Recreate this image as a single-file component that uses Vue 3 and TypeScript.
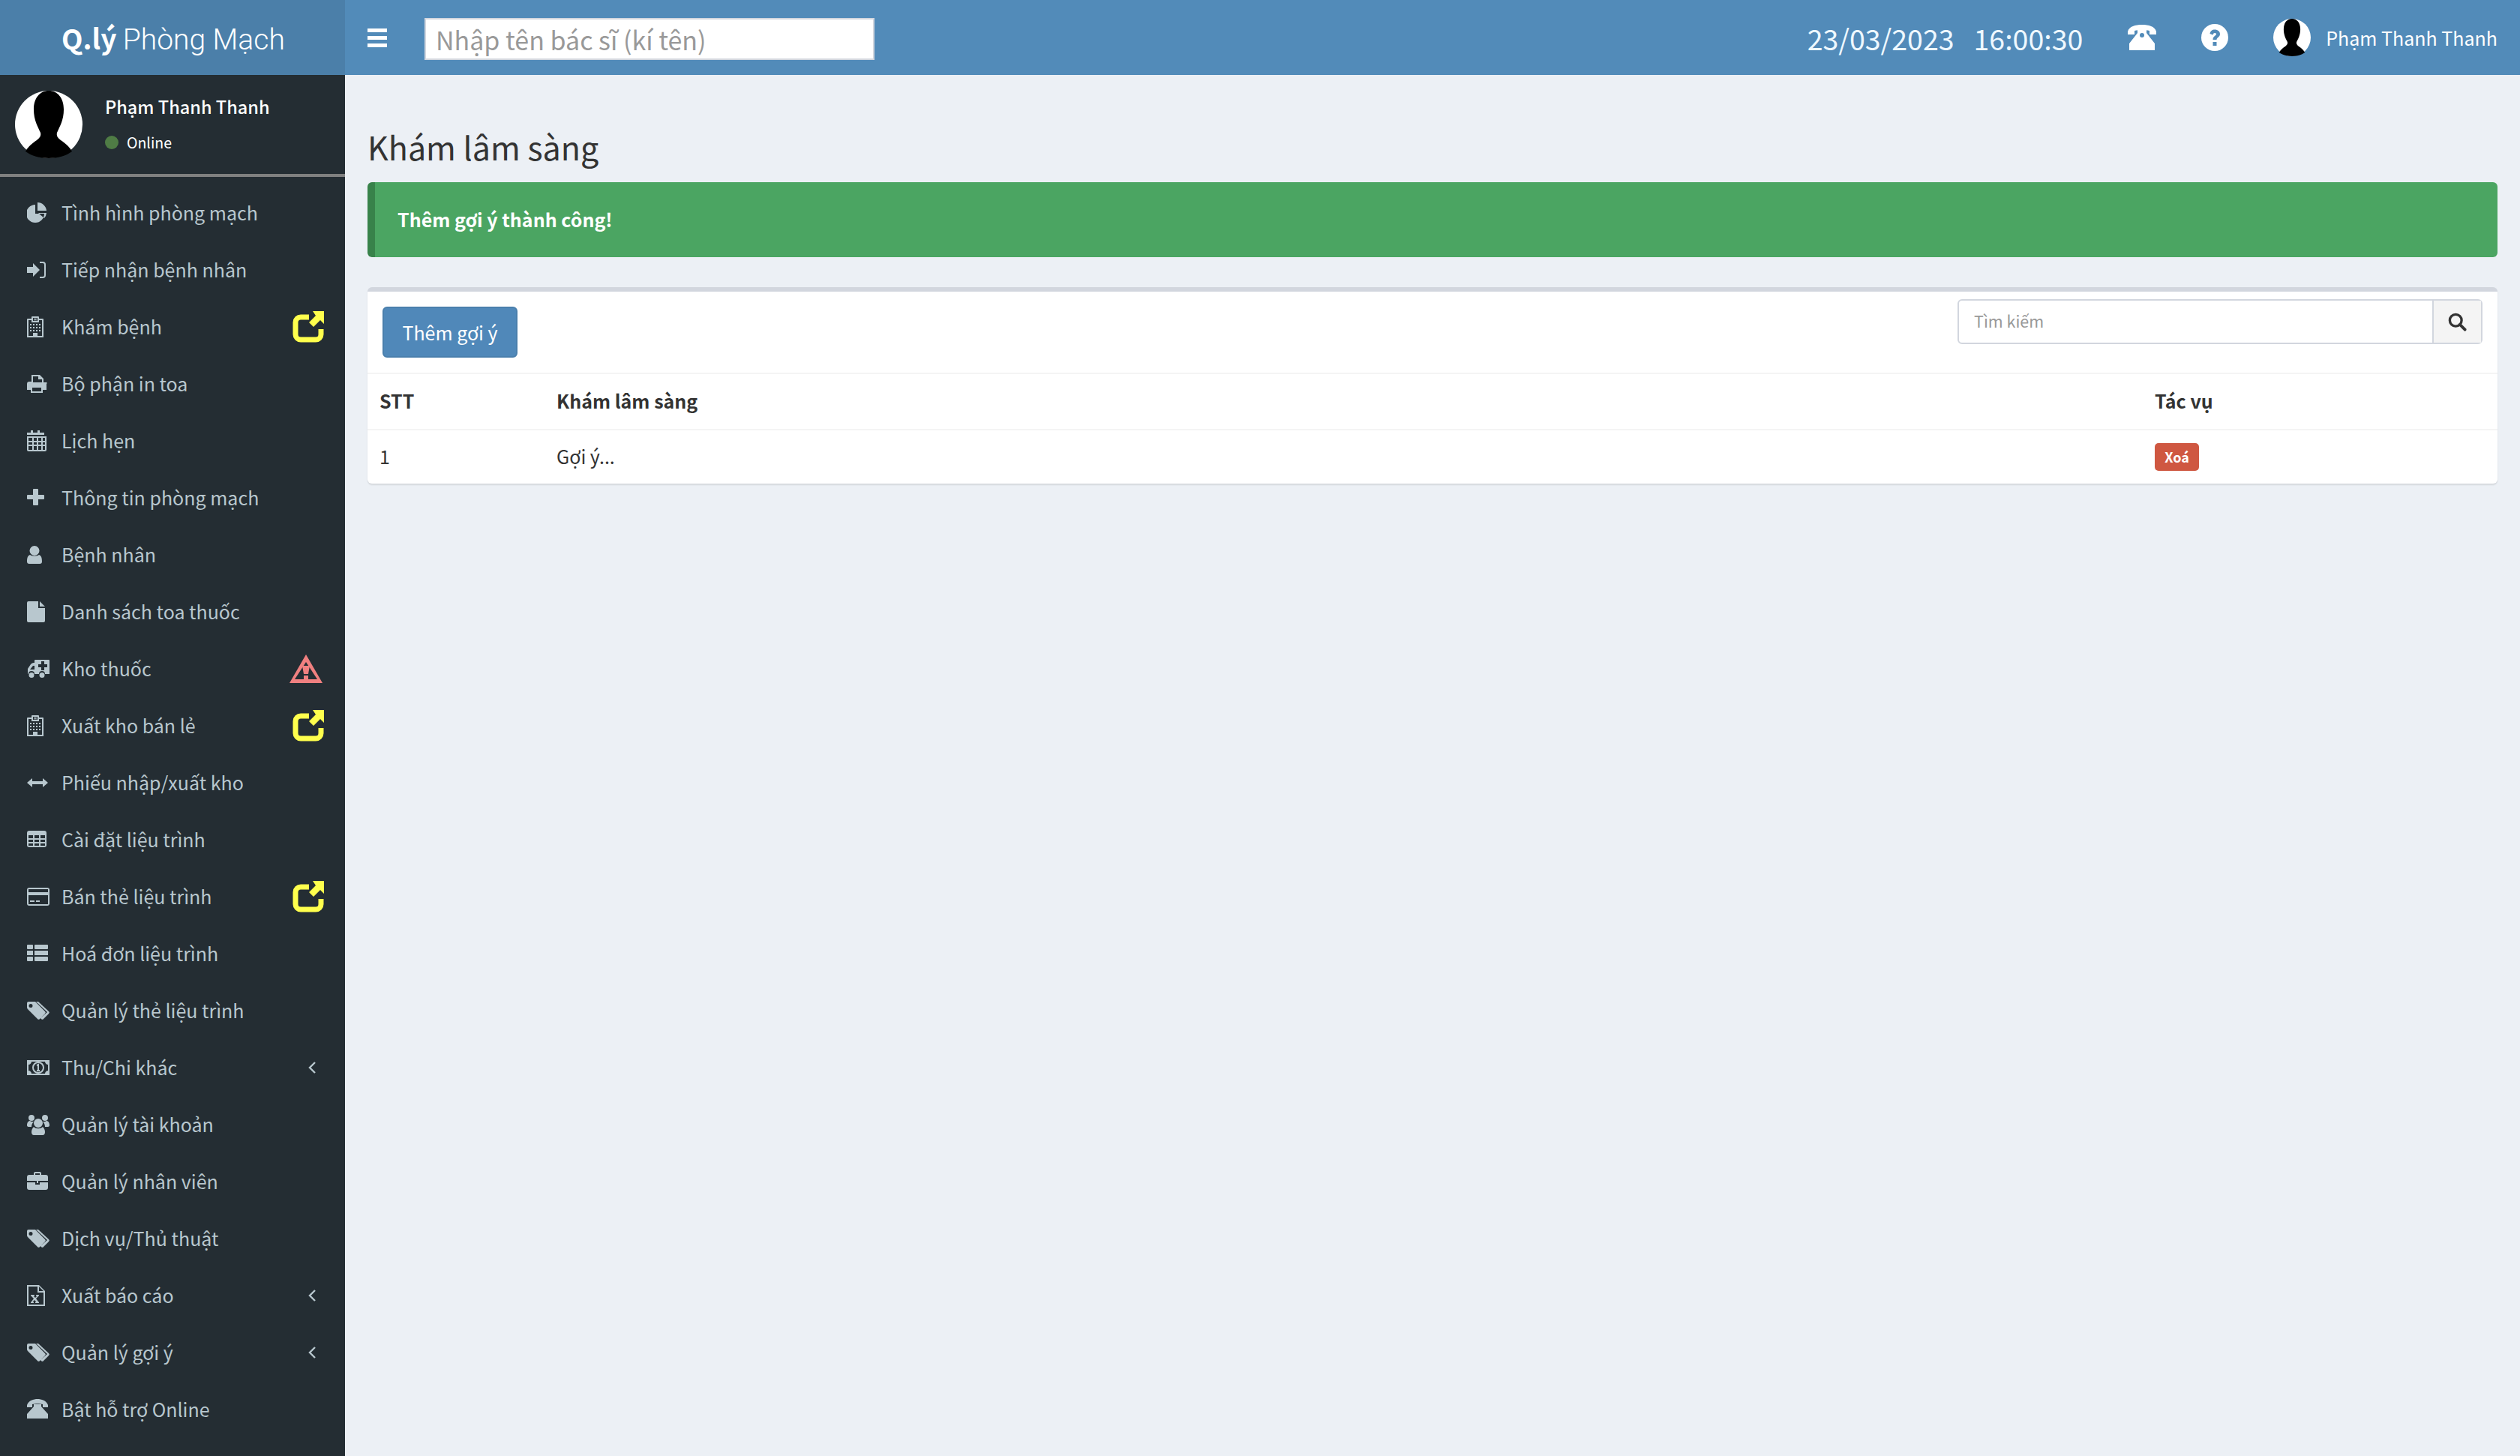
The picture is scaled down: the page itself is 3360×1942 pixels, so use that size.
<template>
  <div class="page">
    <header class="topbar">
      <div class="logo"><b>Q.lý</b> <span>Phòng Mạch</span></div>
      <div class="bar">
        <button class="burger" aria-label="menu"><i /><i /><i /></button>
        <input class="sign-input" placeholder="Nhập tên bác sĩ (kí tên)">
        <div class="bar-right">
          <span class="clock">23/03/2023</span>
          <span class="clock time">16:00:30</span>
          <svg class="phone" viewBox="0 0 38 34" width="38" height="34">
            <path d="M0 9C2 2 10 0 19 0s17 2 19 9v4h-9V8c-3-1-6-1-10-1s-7 0-10 1v5H0Z" fill="#fff" />
            <path d="M13 6h12v5l11 14v9H2v-9l11-14Z" fill="#fff" />
            <circle cx="19" cy="14" r="3" fill="#528bb9" />
          </svg>
          <svg class="help" viewBox="0 0 36 36" width="36" height="36">
            <circle cx="18" cy="18" r="18" fill="#fff" />
            <path d="M11.5 13c.5-3.500 3-5.500 6.500-5.500 4 0 7 2.500 7 6 0 4-4.500 4.500-4.500 7.500h-5c0-5 4.500-5.500 4.500-7.500 0-1-1-1.500-2-1.500-1.200 0-2 .8-2.500 2.500ZM15.500 24h5v5h-5Z" fill="#528bb9" />
          </svg>
          <svg class="avatar-small" viewBox="0 0 90 90" width="50" height="50">
            <circle cx="45" cy="45" r="45" fill="#fff" />
            <path :d="silhouette" fill="#000" />
          </svg>
          <span class="bar-name">Phạm Thanh Thanh</span>
        </div>
      </div>
    </header>

    <aside class="sidebar">
      <div class="user-panel">
        <svg viewBox="0 0 90 90" width="90" height="90">
          <circle cx="45" cy="45" r="45" fill="#fff" />
          <path :d="silhouette" fill="#000" />
        </svg>
        <div class="user-info">
          <div class="user-name">Phạm Thanh Thanh</div>
          <div class="user-status"><i />Online</div>
        </div>
      </div>
      <ul class="menu">
        <li v-for="item in menu" :key="item.label">
          <svg class="menu-icon" viewBox="0 0 32 32" width="32" height="32">
            <path v-if="icons[item.icon].fill" :d="icons[item.icon].fill" fill="#b8c7ce" fill-rule="evenodd" />
            <path v-if="icons[item.icon].line" :d="icons[item.icon].line" fill="none" stroke="#b8c7ce" stroke-width="2" />
          </svg>
          <span class="menu-label">{{ item.label }}</span>
          <svg v-if="item.tail === 'share'" class="tail" viewBox="0 0 42 42" width="42" height="42">
            <path d="M22 8H11a7 7 0 0 0-7 7v16a7 7 0 0 0 7 7h20a7 7 0 0 0 7-7v-7" fill="none" stroke="#ffff4d" stroke-width="7" />
            <path d="M27 0h15v17l-5-5-9 9-6-6 9-9Z" fill="#ffff4d" />
          </svg>
          <svg v-else-if="item.tail === 'warn'" class="tail warn" viewBox="0 0 44 38" width="44" height="38">
            <path d="M22 0 44 38H0ZM22 10 7 33h30Z" fill="#f08080" fill-rule="evenodd" />
            <path d="M17 15h10l-2 11h-6ZM19 28h6v5h-6Z" fill="#f08080" />
          </svg>
          <svg v-else-if="item.tail === 'arrow'" class="tail chevron" viewBox="0 0 12 18" width="12" height="18">
            <path d="M10 2 3 9l7 7" fill="none" stroke="#b8c7ce" stroke-width="2.4" />
          </svg>
        </li>
      </ul>
    </aside>

    <main class="content">
      <h1>Khám lâm sàng</h1>
      <div class="alert">Thêm gợi ý thành công!</div>
      <section class="box">
        <div class="box-tools">
          <button class="btn-add">Thêm gợi ý</button>
          <div class="search">
            <input placeholder="Tìm kiếm">
            <span class="search-btn">
              <svg viewBox="0 0 24 24" width="27" height="27">
                <circle cx="10" cy="10" r="7" fill="none" stroke="#333" stroke-width="3" />
                <path d="m15 15 6 6" stroke="#333" stroke-width="3.5" stroke-linecap="round" />
              </svg>
            </span>
          </div>
        </div>
        <table>
          <colgroup>
            <col class="col-stt">
            <col>
            <col class="col-action">
          </colgroup>
          <thead>
            <tr>
              <th>STT</th>
              <th>Khám lâm sàng</th>
              <th>Tác vụ</th>
            </tr>
          </thead>
          <tbody>
            <tr>
              <td>1</td>
              <td>Gợi ý...</td>
              <td><span class="badge">Xoá</span></td>
            </tr>
          </tbody>
        </table>
      </section>
    </main>
  </div>
</template>

<script setup lang="ts">
type Tail = 'share' | 'warn' | 'arrow'

interface MenuItem {
  icon: string
  label: string
  tail?: Tail
}

const silhouette = 'M45 0C33 0 25 10 25 25c0 14 5 22 9 31 1 4-1 7-5 10-6 4-12 9-15 15 8 6 19 9 31 9s23-3 31-9c-3-6-9-11-15-15-4-3-6-6-5-10 4-9 9-17 9-31C65 10 57 0 45 0Z'

const icons: Record<string, { fill?: string, line?: string }> = {
  pie: { fill: 'M11 5A12 12 0 1 0 23 17H11ZM14 2A12 12 0 0 1 26 13H14ZM15 16h11a12 12 0 0 1-3 7Z' },
  signin: { fill: 'M0 12h8V7l9 9-9 9v-5H0Z', line: 'M17 6h4a3 3 0 0 1 3 3v14a3 3 0 0 1-3 3h-4' },
  hospital: { fill: 'M6 5V3a1 1 0 0 1 1-1h8a1 1 0 0 1 1 1v2h5a1 1 0 0 1 1 1v24H0V6a1 1 0 0 1 1-1ZM2 7v21h6v-4h6v4h6V7h-4v3H6V7ZM8 4v4h6V4ZM9.5 4.5h1v1h1v-1h1v3h-1v-1h-1v1h-1ZM4 12h2v2H4ZM8 12h2v2H8ZM12 12h2v2h-2ZM16 12h2v2h-2ZM4 16h2v2H4ZM8 16h2v2H8ZM12 16h2v2h-2ZM16 16h2v2h-2ZM4 20h2v2H4ZM8 20h2v2H8ZM12 20h2v2h-2ZM16 20h2v2h-2Z' },
  print: { fill: 'M6 4h11l5 5v5h3a1 1 0 0 1 1 2v8h-5v4H5v-4H0v-8a3 3 0 0 1 3-3h3ZM8 6v8h12v-4h-5V6ZM7 21v5h12v-5Z' },
  calendar: { fill: 'M5 2h3v3h6V2h3v3h6v3H0V5h5ZM0 10h26v18a2 2 0 0 1-2 2H2a2 2 0 0 1-2-2ZM2 12v4h5v-4ZM9 12v4h4v-4ZM15 12v4h4v-4ZM21 12v4h3v-4ZM2 18v3h5v-3ZM9 18v3h4v-3ZM15 18v3h4v-3ZM21 18v3h3v-3ZM2 23v5h5v-5ZM9 23v5h4v-5ZM15 23v5h4v-5ZM21 23v5h3v-5Z' },
  plus: { fill: 'M9 4h5a1 1 0 0 1 1 1v7h7a1 1 0 0 1 1 1v4a1 1 0 0 1-1 1h-7v7a1 1 0 0 1-1 1H9a1 1 0 0 1-1-1v-7H1a1 1 0 0 1-1-1v-4a1 1 0 0 1 1-1h7V5a1 1 0 0 1 1-1Z' },
  user: { fill: 'M10 4a6.5 6.5 0 1 1 0 13 6.5 6.5 0 0 1 0-13ZM4 16c3 2 9 2 12 0 3 1 4 4 4 9 0 2-1 3-3 3H3c-2 0-3-1-3-3 0-5 1-8 4-9Z' },
  file: { fill: 'M0 4a2 2 0 0 1 2-2h13v9h9v17a2 2 0 0 1-2 2H2a2 2 0 0 1-2-2ZM17 2l7 7h-7Z' },
  ambulance: { fill: 'M11 4h18a1 1 0 0 1 1 1v18h-6a4 4 0 0 0-8 0H10a4 4 0 0 0-8 0 1 1 0 0 1-1-1v-6l4-6c1-1 2-2 4-2h1V5a1 1 0 0 1 1-1ZM4 17h6v-5H8ZM19 6v4h-4v4h4v4h4v-4h4v-4h-4V6ZM6 21a3.5 3.5 0 1 1 0 7 3.5 3.5 0 0 1 0-7ZM20 21a3.5 3.5 0 1 1 0 7 3.5 3.5 0 0 1 0-7Z' },
  arrows: { fill: 'M0 16l7-6v4h14v-4l7 6-7 6v-4H7v4Z' },
  table: { fill: 'M3 4h20a3 3 0 0 1 3 3v16a3 3 0 0 1-3 3H3a3 3 0 0 1-3-3V7a3 3 0 0 1 3-3ZM2 10v4h6v-4ZM10 10v4h6v-4ZM18 10v4h6v-4ZM2 16v3h6v-3ZM10 16v3h6v-3ZM18 16v3h6v-3ZM2 21v3h6v-3ZM10 21v3h6v-3ZM18 21v3h6v-3Z' },
  card: { fill: 'M3 4h24a3 3 0 0 1 3 3v18a3 3 0 0 1-3 3H3a3 3 0 0 1-3-3V7a3 3 0 0 1 3-3ZM2 6v4h26V6ZM2 14v12h26V14ZM4 21h6v2H4ZM12 21h5v2h-5Z' },
  list: { fill: 'M1 4h6a1 1 0 0 1 1 1v4a1 1 0 0 1-1 1H1a1 1 0 0 1-1-1V5a1 1 0 0 1 1-1ZM11 4h16a1 1 0 0 1 1 1v4a1 1 0 0 1-1 1H11a1 1 0 0 1-1-1V5a1 1 0 0 1 1-1ZM0 12h8v6H0ZM10 12h18v6H10ZM1 20h6a1 1 0 0 1 1 1v4a1 1 0 0 1-1 1H1a1 1 0 0 1-1-1v-4a1 1 0 0 1 1-1ZM11 20h16a1 1 0 0 1 1 1v4a1 1 0 0 1-1 1H11a1 1 0 0 1-1-1v-4a1 1 0 0 1 1-1Z' },
  tags: { fill: 'M2 4h9l13 13a2 2 0 0 1 0 3l-7 7a2 2 0 0 1-3 0L1 14a3 3 0 0 1-1-2V6a2 2 0 0 1 2-2ZM5 7a2.5 2.5 0 1 0 0 5 2.5 2.5 0 0 0 0-5ZM15 4l14 13a2 2 0 0 1 0 3l-7 7a2 2 0 0 1-3 0l-1-1 9-8L12 4Z' },
  money: { fill: 'M0 6h30v20H0ZM6 8c0 2-2 4-4 4v8c2 0 4 2 4 4h18c0-2 2-4 4-4v-8c-2 0-4-2-4-4Z', line: 'M15 16m-7 0a7 7 0 1 0 14 0a7 7 0 1 0-14 0M13 13l2-1v8M13 20h4' },
  users: { fill: 'M15 8a6 6 0 1 1 0 12 6 6 0 0 1 0-12ZM6 3a4 4 0 1 1 0 8 4 4 0 0 1 0-8ZM24 3a4 4 0 1 1 0 8 4 4 0 0 1 0-8ZM9 12c-2 2-3 4-3 7H2c-1 0-2-1-2-2 0-4 2-6 4-6 1 1 3 1 5 1ZM21 12c2 2 3 4 3 7h4c1 0 2-1 2-2 0-4-2-6-4-6-1 1-3 1-5 1ZM9 19c3 3 9 3 12 0 2 2 3 4 3 7 0 2-1 4-3 4H9c-2 0-3-2-3-4 0-3 1-5 3-7Z' },
  briefcase: { fill: 'M9 7V5a2 2 0 0 1 2-2h6a2 2 0 0 1 2 2v2h6a3 3 0 0 1 3 3v5H0v-5a3 3 0 0 1 3-3ZM11 5v2h6V5ZM0 17h11v3h6v-3h11v7a3 3 0 0 1-3 3H3a3 3 0 0 1-3-3ZM13 15h2v3h-2Z' },
  excel: { fill: 'M0 2h16l8 8v20H0ZM2 4v24h20V12h-8V4ZM16 4v6h6ZM5 15h5v1l-1 1 2 2 2-2-1-1v-1h4v1l-1 1-3 3 3 4 1 1v1h-5v-1l1-1-2-2-2 2 1 1v1H5v-1l1-1 3-4-3-3-1-1Z' },
  phone: { fill: 'M0 10C2 4 9 2 14 2s12 2 14 8v3h-7V9c-4-1-10-1-14 0v4H0ZM9 9h10v3l9 10v6H0v-6l9-10Z' }
}

const menu: MenuItem[] = [
  { icon: 'pie', label: 'Tình hình phòng mạch' },
  { icon: 'signin', label: 'Tiếp nhận bệnh nhân' },
  { icon: 'hospital', label: 'Khám bệnh', tail: 'share' },
  { icon: 'print', label: 'Bộ phận in toa' },
  { icon: 'calendar', label: 'Lịch hẹn' },
  { icon: 'plus', label: 'Thông tin phòng mạch' },
  { icon: 'user', label: 'Bệnh nhân' },
  { icon: 'file', label: 'Danh sách toa thuốc' },
  { icon: 'ambulance', label: 'Kho thuốc', tail: 'warn' },
  { icon: 'hospital', label: 'Xuất kho bán lẻ', tail: 'share' },
  { icon: 'arrows', label: 'Phiếu nhập/xuất kho' },
  { icon: 'table', label: 'Cài đặt liệu trình' },
  { icon: 'card', label: 'Bán thẻ liệu trình', tail: 'share' },
  { icon: 'list', label: 'Hoá đơn liệu trình' },
  { icon: 'tags', label: 'Quản lý thẻ liệu trình' },
  { icon: 'money', label: 'Thu/Chi khác', tail: 'arrow' },
  { icon: 'users', label: 'Quản lý tài khoản' },
  { icon: 'briefcase', label: 'Quản lý nhân viên' },
  { icon: 'tags', label: 'Dịch vụ/Thủ thuật' },
  { icon: 'excel', label: 'Xuất báo cáo', tail: 'arrow' },
  { icon: 'tags', label: 'Quản lý gợi ý', tail: 'arrow' },
  { icon: 'phone', label: 'Bật hỗ trợ Online' }
]
</script>

<style>
html, body {
  margin: 0;
  background: #ecf0f5;
}
</style>

<style scoped>
.page {
  display: grid;
  grid-template-columns: 460px 1fr;
  grid-template-rows: 100px 1fr;
  height: 1942px;
  overflow: hidden;
  font-family: "Noto Sans CJK SC", "Noto Sans", sans-serif;
  font-size: 25px;
  color: #333;
  background: #ecf0f5;
}

.topbar {
  grid-column: 1 / 3;
  display: flex;
  background: #528bb9;
  color: #fff;
}

.logo {
  width: 460px;
  padding-left: 82px;
  box-sizing: border-box;
  background: #4b7fa9;
  font-size: 37px;
  line-height: 100px;
  white-space: nowrap;
}

.logo b {
  font-weight: 700;
}

.logo span {
  font-family: Roboto, sans-serif;
  font-weight: 300;
  font-size: 39px;
}

.bar {
  flex: 1;
  display: flex;
  align-items: center;
  padding: 0 30px;
}

.burger {
  display: flex;
  flex-direction: column;
  gap: 5px;
  width: 26px;
  margin-right: 50px;
  padding: 0;
  border: 0;
  background: none;
}

.burger i {
  display: block;
  width: 26px;
  height: 5px;
  background: #fff;
}

.sign-input {
  width: 600px;
  height: 56px;
  margin-top: 4px;
  box-sizing: border-box;
  padding: 0 13px;
  border: 2px solid #d2d6de;
  background: #fff;
  font: inherit;
  font-size: 34px;
  outline: none;
}

.sign-input::placeholder {
  color: #999;
}

.bar-right {
  display: flex;
  align-items: center;
  margin-left: auto;
}

.clock {
  font-size: 37.5px;
  color: #eef8ff;
}

.time {
  margin-left: 26px;
}

.phone {
  margin-left: 60px;
}

.help {
  margin-left: 60px;
}

.avatar-small {
  margin-left: 60px;
}

.bar-name {
  margin-left: 20px;
}

.sidebar {
  background: #242d33;
  color: #b8c7ce;
}

.user-panel {
  display: flex;
  align-items: center;
  gap: 30px;
  height: 132px;
  padding-left: 20px;
  border-bottom: 4px solid #808080;
}

.user-info {
  margin-top: -4px;
  color: #fff;
}

.user-name {
  font-size: 23.5px;
  font-weight: 500;
  line-height: 36px;
}

.user-status {
  display: flex;
  align-items: center;
  gap: 11px;
  margin-top: 16px;
  font-size: 19.5px;
  line-height: 28px;
}

.user-status i {
  width: 18px;
  height: 18px;
  border-radius: 50%;
  background: #4f7c45;
}

.menu {
  margin: 10px 0 0;
  padding: 0;
  list-style: none;
}

.menu li {
  display: flex;
  align-items: center;
  height: 76px;
  padding-left: 36px;
}

.menu-icon {
  flex: none;
  margin-right: 14px;
}

.menu-label {
  flex: 1;
  padding-bottom: 2px;
}

.tail {
  margin-right: 28px;
}

.warn {
  margin-right: 30px;
}

.chevron {
  margin-right: 38px;
}

.content {
  padding: 0 30px;
}

h1 {
  margin: 0;
  padding-top: 47px;
  font-size: 43px;
  font-weight: 400;
  line-height: 96px;
}

.alert {
  height: 100px;
  box-sizing: border-box;
  padding-left: 30px;
  border-left: 10px solid #38824a;
  border-radius: 6px;
  background: #4ba562;
  color: #fff;
  font-weight: 700;
  line-height: 98px;
}

.box {
  margin-top: 40px;
  border-top: 6px solid #d2d6de;
  border-radius: 6px;
  background: #fff;
  box-shadow: 0 2px 2px rgba(0, 0, 0, 0.1);
}

.box-tools {
  display: flex;
  justify-content: space-between;
  height: 110px;
  box-sizing: border-box;
  padding: 10px 20px 0;
  border-bottom: 2px solid #f4f4f4;
}

.btn-add {
  width: 180px;
  height: 68px;
  margin-top: 10px;
  border: 2px solid #4a7fac;
  border-radius: 6px;
  background: #5088b9;
  color: #fff;
  font: inherit;
}

.search {
  display: flex;
  width: 700px;
  height: 60px;
  box-sizing: border-box;
  border: 2px solid #d2d6de;
  border-radius: 6px;
}

.search input {
  flex: 1;
  min-width: 0;
  padding: 0 0 4px 20px;
  border: 0;
  background: none;
  font: inherit;
  font-size: 21.5px;
  outline: none;
}

.search input::placeholder {
  color: #999;
}

.search-btn {
  display: flex;
  align-items: center;
  justify-content: center;
  width: 63px;
  border-left: 2px solid #d2d6de;
  background: #f4f4f4;
}

table {
  width: 100%;
  border-collapse: collapse;
  table-layout: fixed;
  font-size: 25px;
  color: #333;
}

.col-stt {
  width: 236px;
}

.col-action {
  width: 473px;
}

th, td {
  height: 72px;
  padding: 0 16px 3px;
  box-sizing: border-box;
  text-align: left;
}

th {
  border-bottom: 2px solid #f4f4f4;
  font-weight: 700;
  height: 74px;
}

.badge {
  display: inline-block;
  width: 59px;
  height: 37px;
  border-radius: 5px;
  background: #cf5741;
  color: #fff;
  font-size: 18px;
  font-weight: 700;
  line-height: 37px;
  text-align: center;
  vertical-align: middle;
}
</style>
